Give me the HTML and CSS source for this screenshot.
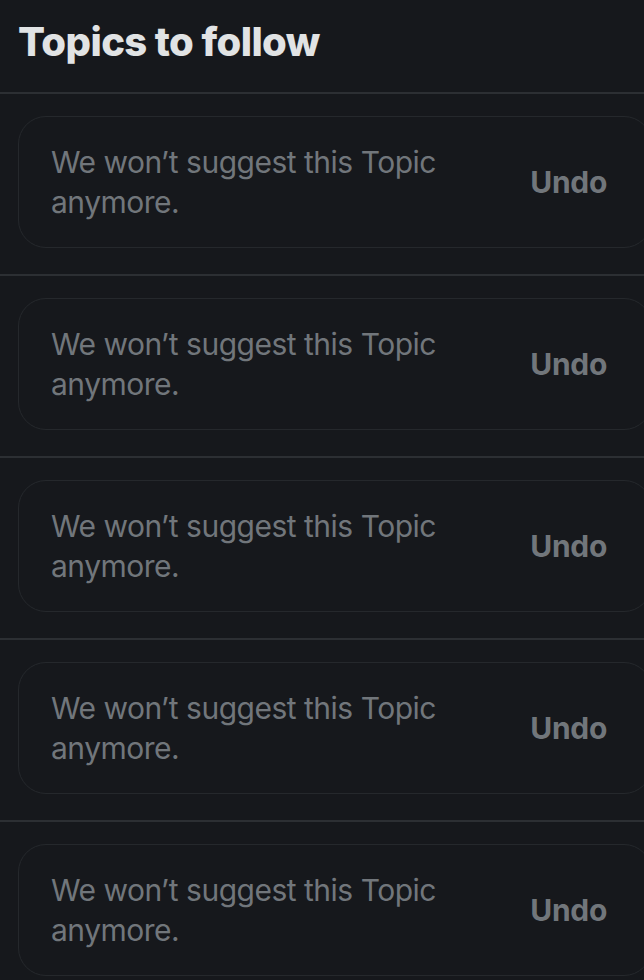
FILE: index.html
```html
<!DOCTYPE html>
<html>
<head>
<meta charset="utf-8">
<link rel="stylesheet" href="styles.css">
</head>
<body>
<div class="page">
  <header class="header"><h1 class="title">Topics to follow</h1></header>
  <div class="row"><div class="card"><p class="msg">We won’t suggest this Topic anymore.</p><span class="undo">Undo</span></div></div>
  <div class="row"><div class="card"><p class="msg">We won’t suggest this Topic anymore.</p><span class="undo">Undo</span></div></div>
  <div class="row"><div class="card"><p class="msg">We won’t suggest this Topic anymore.</p><span class="undo">Undo</span></div></div>
  <div class="row"><div class="card"><p class="msg">We won’t suggest this Topic anymore.</p><span class="undo">Undo</span></div></div>
  <div class="row"><div class="card"><p class="msg">We won’t suggest this Topic anymore.</p><span class="undo">Undo</span></div></div>
</div>
</body>
</html>
```
FILE: styles.css
```css
html, body {
  margin: 0;
  padding: 0;
  background: #16181c;
}
body {
  font-family: Inter, "Liberation Sans", sans-serif;
  overflow: hidden;
}
.page {
  width: 644px;
  overflow: hidden;
}
.header {
  display: flex;
  align-items: center;
  padding-left: 18px;
  border-bottom: 2px solid #2c2f33;
  box-sizing: border-box;
  height: 94px;
}
.title {
  margin: 0;
  font-size: 40px;
  line-height: 48px;
  font-weight: 800;
  color: #e1e3e4;
  letter-spacing: -0.6px;
  position: relative;
  top: -4px;
}
.row {
  padding: 22px 0 25px 0;
  border-bottom: 2px solid #2c2f33;
  height: 182px;
  box-sizing: border-box;
}
.card {
  margin: 0 -8px 0 18px;
  border: 1.5px solid #25282c;
  border-radius: 28px;
  padding: 24px 42px 24px 32px;
  display: flex;
  align-items: center;
  justify-content: space-between;
  height: 132px;
  box-sizing: border-box;
}
.msg {
  margin: 0;
  width: 420px;
  font-size: 30px;
  line-height: 40px;
  letter-spacing: -0.5px;
  color: #71767b;
  font-weight: 400;
}
.undo {
  font-size: 30px;
  font-weight: 700;
  letter-spacing: -0.3px;
  color: #71767b;
  margin-right: 2px;
}
```
